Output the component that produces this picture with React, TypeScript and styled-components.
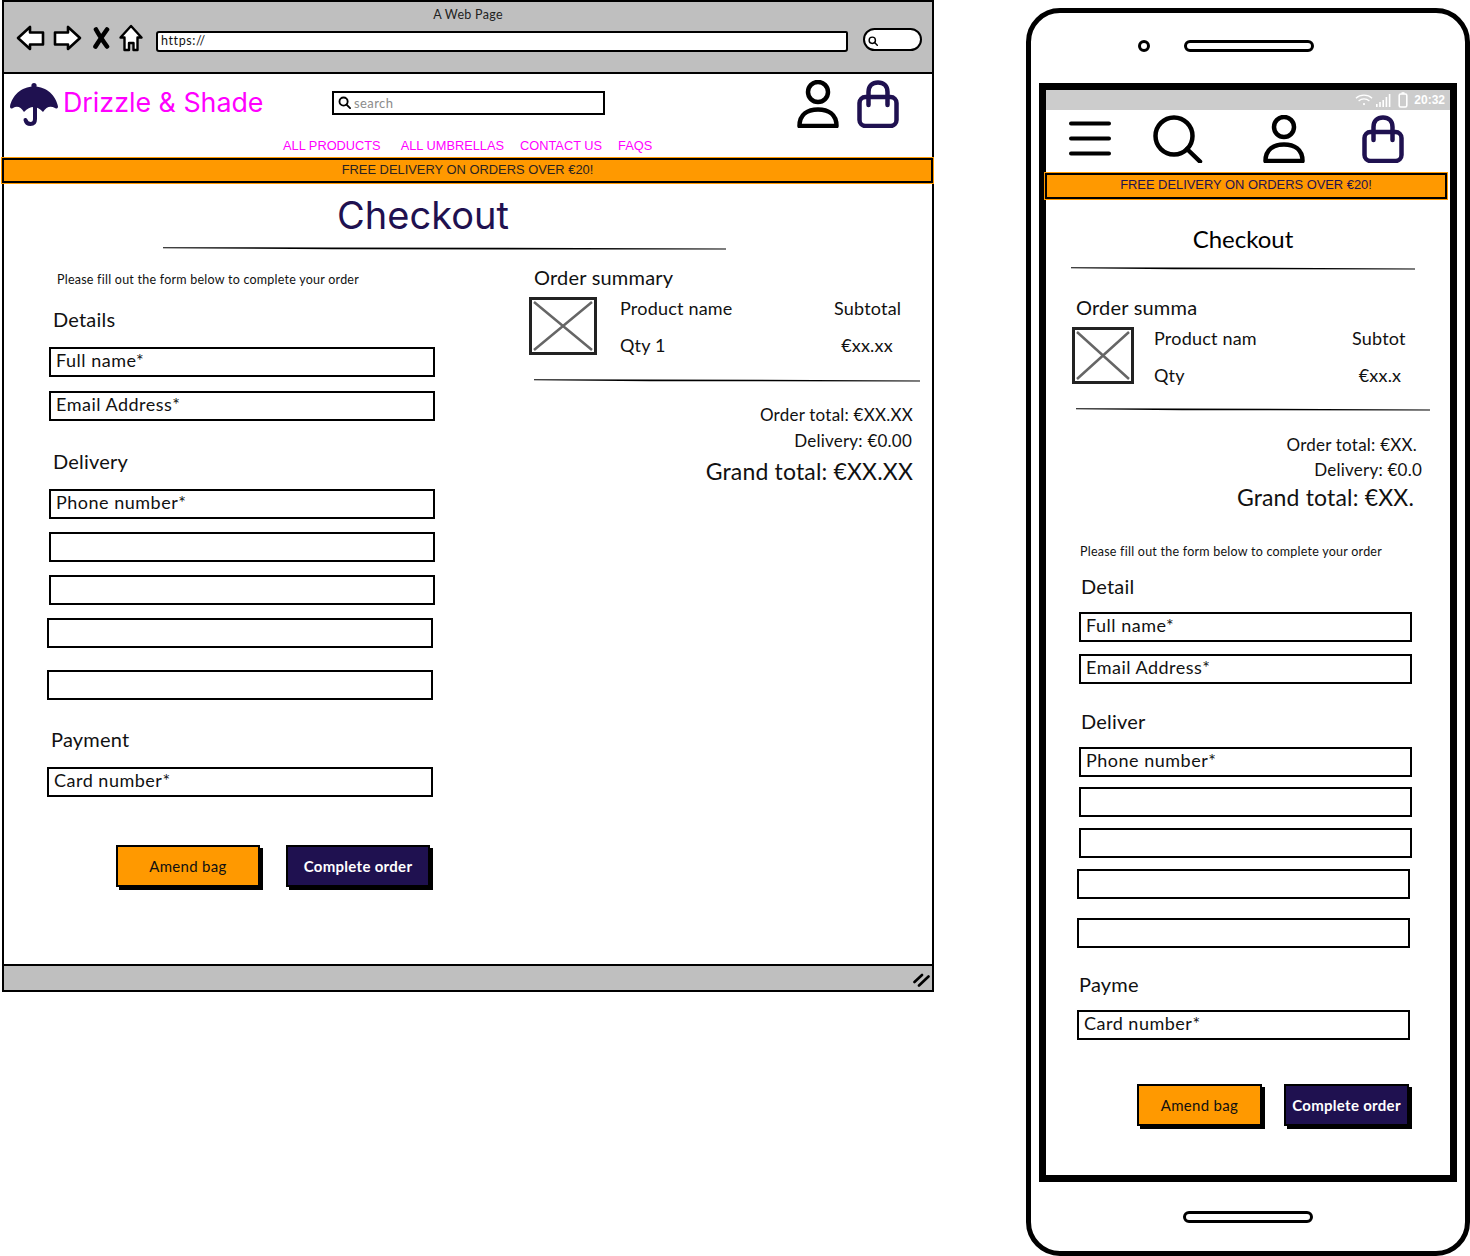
import styled, { createGlobalStyle } from "styled-components";

const NAVY = "#1f1150";
const ORANGE = "#ff9900";
const MAGENTA = "#ff00ff";
const GREY = "#bfbfbf";
const FONT = `Lato, "Open Sans", sans-serif`;

const GlobalStyle = createGlobalStyle`
  html, body { margin: 0; padding: 0; background: #fff; }
  * { box-sizing: border-box; }
  #root { width: 1470px; height: 1256px; overflow: hidden; }
`;

const Page = styled.div`
  display: flex;
  align-items: flex-start;
  padding-left: 2px;
  gap: 92px;
  font-family: ${FONT};
  color: #111;
`;

/* ---------- browser chrome ---------- */

const BrowserWindow = styled.section`
  flex: none;
  width: 932px;
  height: 992px;
  border: 2px solid #000;
  display: flex;
  flex-direction: column;
`;

const TitleBar = styled.header`
  flex: none;
  height: 72px;
  background: ${GREY};
  border-bottom: 2px solid #000;
`;

const PageTitle = styled.div`
  margin-top: 5px;
  text-align: center;
  font-size: 12.5px;
  line-height: 16px;
  color: #222;
  letter-spacing: 0.3px;
`;

const ChromeRow = styled.div`
  display: flex;
  align-items: center;
  height: 30px;
  padding-left: 12px;
`;

const ChromeIcon = styled.svg<{ $gap?: number }>`
  display: block;
  flex: none;
  margin-left: ${(p) => p.$gap ?? 0}px;
`;

const UrlBox = styled.div`
  width: 692px;
  height: 21px;
  margin: 7px 0 0 13px;
  padding-left: 3px;
  background: #fff;
  border: 2.5px solid #000;
  border-radius: 3px 2px 3px 3px;
  font-size: 12.5px;
  line-height: 16px;
  letter-spacing: 0.6px;
`;

const SearchPill = styled.div`
  width: 59px;
  height: 23px;
  margin: 2px 0 0 15px;
  padding: 6px 0 0 3px;
  background: #fff;
  border: 2.5px solid #000;
  border-radius: 12px;
`;

const StatusStrip = styled.footer`
  flex: none;
  height: 26px;
  margin-top: auto;
  padding: 7px 2px 0 0;
  display: flex;
  justify-content: flex-end;
  background: ${GREY};
  border-top: 2px solid #000;
`;

/* ---------- site header ---------- */

const SiteHeader = styled.div`
  flex: none;
  height: 84px;
  padding: 6px 0 0 6px;
  display: grid;
  grid-template-columns: 322px 465px auto auto;
  grid-template-rows: 50px 1fr;
  justify-content: start;
`;

const Brand = styled.div`
  display: flex;
  align-items: flex-start;
  padding-top: 3px;
`;

const BrandName = styled.div`
  margin: 3px 0 0 5px;
  font-family: Inter, sans-serif;
  font-size: 26.8px;
  line-height: 32px;
  color: ${MAGENTA};
  white-space: nowrap;
`;

const SiteSearch = styled.div`
  width: 273px;
  height: 24px;
  margin-top: 11px;
  padding: 0 0 1px 4px;
  display: flex;
  align-items: center;
  gap: 3px;
  border: 2px solid #000;
  border-left-width: 2.5px;
  font-size: 13px;
  color: #8b8b8b;
  letter-spacing: 0.4px;
`;

const HeaderIcon = styled.svg<{ $gap?: number; $top?: number }>`
  display: block;
  flex: none;
  margin-left: ${(p) => p.$gap ?? 0}px;
  margin-top: ${(p) => p.$top ?? 0}px;
`;

const NavLinks = styled.nav`
  grid-column: 1 / -1;
  display: flex;
  gap: 16px;
  padding: 7px 0 0 273px;
  font-family: "Liberation Sans", sans-serif;
  font-size: 12.8px;
  line-height: 18px;
  color: ${MAGENTA};
`;

const NavLink = styled.span<{ $gap?: number }>`
  margin-left: ${(p) => p.$gap ?? 0}px;
  white-space: nowrap;
`;

const Banner = styled.div<{ $navy?: boolean; $width: number; $height: number; $left: number; $top?: number }>`
  flex: none;
  width: ${(p) => p.$width}px;
  height: ${(p) => p.$height}px;
  margin-left: ${(p) => p.$left}px;
  margin-top: ${(p) => p.$top ?? 0}px;
  padding-bottom: 3px;
  background: ${ORANGE};
  border: 2px solid #000;
  outline: 1px solid ${ORANGE};
  display: flex;
  align-items: center;
  justify-content: center;
  font-family: "Liberation Sans", sans-serif;
  font-size: 12.9px;
  color: ${(p) => (p.$navy ? NAVY : "#2a2320")};
  white-space: nowrap;
`;

/* ---------- shared page parts ---------- */

const Heading = styled.h1<{ $size: number; $lineHeight: number; $top: number; $navy?: boolean; $shift?: number }>`
  margin: ${(p) => p.$top}px ${(p) => p.$shift ?? 0}px 0 0;
  text-align: center;
  font-family: ${(p) => (p.$navy ? "Inter, sans-serif" : FONT)};
  font-size: ${(p) => p.$size}px;
  line-height: ${(p) => p.$lineHeight}px;
  font-weight: 400;
  color: ${(p) => (p.$navy ? NAVY : "#000")};
`;

const HeadingBlock = styled.div<{ $width: number; $left: number }>`
  width: ${(p) => p.$width}px;
  margin-left: ${(p) => p.$left}px;
`;

const Rule = styled.svg<{ $width: number; $left?: number; $top: number }>`
  display: block;
  width: ${(p) => p.$width}px;
  height: 3px;
  margin-left: ${(p) => p.$left ?? 0}px;
  margin-top: ${(p) => p.$top}px;
`;

const Columns = styled.div`
  display: grid;
  grid-template-columns: 525px 1fr;
`;

const Column = styled.div`
  display: flex;
  flex-direction: column;
  align-items: flex-start;
`;

const Note = styled.p<{ $left: number; $top: number }>`
  margin: ${(p) => p.$top}px 0 0 ${(p) => p.$left}px;
  font-size: 12.5px;
  line-height: 16px;
  letter-spacing: 0.24px;
  white-space: nowrap;
`;

const SectionLabel = styled.h2<{ $left: number; $top: number }>`
  margin: ${(p) => p.$top}px 0 0 ${(p) => p.$left}px;
  font-size: 20px;
  line-height: 24px;
  font-weight: 400;
  letter-spacing: 0.2px;
  white-space: nowrap;
`;

const Field = styled.div<{ $left: number; $top: number; $width: number }>`
  width: ${(p) => p.$width}px;
  height: 30px;
  margin: ${(p) => p.$top}px 0 0 ${(p) => p.$left}px;
  padding-left: 5px;
  border: 2px solid #000;
  font-size: 18px;
  line-height: 23px;
  letter-spacing: 0.5px;
  background: #fff;
`;

const ButtonRow = styled.div<{ $left: number; $top: number; $gap: number }>`
  display: flex;
  gap: ${(p) => p.$gap}px;
  margin: ${(p) => p.$top}px 0 0 ${(p) => p.$left}px;
`;

const ActionButton = styled.button<{ $primary?: boolean; $width: number }>`
  width: ${(p) => p.$width}px;
  height: 42px;
  padding: 0;
  border: 2px solid #000;
  box-shadow: 3px 3px 0 #000;
  background: ${(p) => (p.$primary ? NAVY : ORANGE)};
  color: ${(p) => (p.$primary ? "#fff" : "#111")};
  font-family: ${FONT};
  font-size: 15px;
  font-weight: ${(p) => (p.$primary ? 700 : 400)};
  letter-spacing: 0.3px;
  white-space: nowrap;
`;

/* ---------- order summary ---------- */

const Product = styled.div<{ $left: number; $columns: string }>`
  display: grid;
  grid-template-columns: ${(p) => p.$columns};
  margin: 8px 0 0 ${(p) => p.$left}px;
`;

const Thumb = styled.svg<{ $height: number }>`
  display: block;
  grid-row: span 2;
  width: 100%;
  height: ${(p) => p.$height}px;
`;

const ProductText = styled.div<{ $center?: boolean; $top?: number }>`
  font-size: 18px;
  line-height: 24px;
  letter-spacing: 0.2px;
  margin-top: ${(p) => p.$top ?? 0}px;
  text-align: ${(p) => (p.$center ? "center" : "left")};
  white-space: nowrap;
`;

const Totals = styled.div<{ $width: number; $left?: number; $top: number }>`
  width: ${(p) => p.$width}px;
  margin: ${(p) => p.$top}px 0 0 ${(p) => p.$left ?? 0}px;
  display: flex;
  flex-direction: column;
  align-items: flex-end;
`;

const TotalLine = styled.div<{ $grand?: boolean; $top?: number; $inset?: number }>`
  font-size: ${(p) => (p.$grand ? 23 : 17)}px;
  line-height: ${(p) => (p.$grand ? 30 : 24)}px;
  letter-spacing: ${(p) => (p.$grand ? 0.17 : 0.23)}px;
  margin-top: ${(p) => p.$top ?? 0}px;
  margin-right: ${(p) => p.$inset ?? 0}px;
  white-space: nowrap;
`;

/* ---------- phone ---------- */

const PhoneFrame = styled.section`
  flex: none;
  width: 444px;
  height: 1248px;
  margin-top: 8px;
  border: 5px solid #000;
  border-radius: 34px;
  display: flex;
  flex-direction: column;
`;

const EarRow = styled.div`
  flex: none;
  height: 12px;
  margin-top: 27px;
  padding-left: 107px;
  display: flex;
  align-items: center;
  gap: 34px;
`;

const Camera = styled.div`
  width: 12px;
  height: 12px;
  border: 3px solid #000;
  border-radius: 50%;
`;

const Speaker = styled.div<{ $top?: number; $left?: number }>`
  width: 130px;
  height: 12px;
  margin-top: ${(p) => p.$top ?? 0}px;
  margin-left: ${(p) => p.$left ?? 0}px;
  border: 3px solid #000;
  border-radius: 6px;
  flex: none;
`;

const Screen = styled.div`
  flex: none;
  width: 418px;
  height: 1099px;
  margin: 31px 0 0 8px;
  border: 7px solid #000;
  display: flex;
  flex-direction: column;
  align-items: flex-start;
`;

const PhoneStatus = styled.div`
  flex: none;
  align-self: stretch;
  height: 20px;
  padding-right: 5px;
  background: #ccc;
  display: flex;
  align-items: center;
  justify-content: flex-end;
  font-family: "Liberation Sans", sans-serif;
  font-size: 12px;
  font-weight: 700;
  color: #fff;
`;

const StatusTime = styled.span`
  margin-left: 6px;
`;

const PhoneIcons = styled.div`
  flex: none;
  display: flex;
  height: 48px;
  margin-top: 5px;
`;

const FILL_TEXT = "Please fill out the form below to complete your order";

const rulePath = "M0 0.3 L30 0.4 L100 1.4 L100 2.6 L30 2.2 L0 1.2Z";

const BackIcon = ({ flip = false, gap = 0 }: { flip?: boolean; gap?: number }) => (
  <ChromeIcon $gap={gap} width="29" height="26" viewBox="0 0 29 26">
    <path
      d="M2 13 L14 2 V7.5 H27 V19.5 H14 V24 Z"
      fill="#fff"
      stroke="#000"
      strokeWidth="2.6"
      strokeLinejoin="round"
      transform={flip ? "matrix(-1 0 0 1 29 0)" : undefined}
    />
  </ChromeIcon>
);

const UserIcon = ({ gap = 0 }: { gap?: number }) => (
  <HeaderIcon $gap={gap} width="42" height="48" viewBox="0 0 42 48" fill="none" stroke="#000" strokeWidth="4.5">
    <circle cx="21" cy="12" r="10" />
    <path d="M2.5 46 C2.5 34 11 29.5 21 29.5 C31 29.5 39.5 34 39.5 46 Z" strokeLinejoin="round" />
  </HeaderIcon>
);

const BagIcon = ({ gap = 0 }: { gap?: number }) => (
  <HeaderIcon $gap={gap} width="42" height="48" viewBox="0 0 42 48" fill="none" stroke={NAVY} strokeWidth="4.5" strokeLinecap="round">
    <rect x="2.5" y="17" width="37" height="29" rx="6" />
    <path d="M11.5 25 V12 C11.5 5.5 15.5 2.5 21 2.5 C26.5 2.5 30.5 5.5 30.5 12 V25" />
  </HeaderIcon>
);

const SmallGlass = ({ size = 14 }: { size?: number }) => (
  <ChromeIcon width={size} height={size} viewBox="0 0 14 14" fill="none" stroke="#000" strokeWidth="2">
    <circle cx="6" cy="6" r="4.4" />
    <path d="M9.2 9.2 L13 13" strokeLinecap="round" />
  </ChromeIcon>
);

const Umbrella = () => (
  <svg width="48" height="43" viewBox="0 0 48 43">
    <circle cx="24" cy="2.6" r="2.6" fill={NAVY} />
    <path
      d="M24 3.5 C11 3.5 2 13 0 23.5 Q0 26.5 3 25 Q9 21 14 29 Q23.5 19 33 29 Q38 21 45 25 Q48 26.5 48 23.5 C46 13 37 3.5 24 3.5Z"
      fill={NAVY}
    />
    <path d="M25 24 V36 Q25 41 20.5 41 Q16.5 41 15.5 37" fill="none" stroke={NAVY} strokeWidth="4" strokeLinecap="round" />
  </svg>
);

const ProductThumb = ({ height, width }: { height: number; width: number }) => (
  <Thumb $height={height} viewBox={`0 0 ${width} ${height}`}>
    <rect x="1.5" y="1.5" width={width - 3} height={height - 3} fill="#fff" stroke="#222" strokeWidth="3" />
    <path d={`M5 5 L${width - 5} ${height - 5} M${width - 5} 5 L5 ${height - 5}`} stroke="#666" strokeWidth="2.5" />
  </Thumb>
);

const TaperRule = (props: { $width: number; $left?: number; $top: number }) => (
  <Rule {...props} viewBox="0 0 100 3" preserveAspectRatio="none">
    <path d={rulePath} fill="#000" />
  </Rule>
);

const Browser = () => (
  <BrowserWindow>
    <TitleBar>
      <PageTitle>A Web Page</PageTitle>
      <ChromeRow>
        <BackIcon />
        <BackIcon flip gap={8} />
        <ChromeIcon $gap={11} width="17" height="22" viewBox="0 0 17 22">
          <path d="M3 2.5 C6 8 10 14 14 19.5 M14 2.5 C10 8 6 14 2.5 19.5" fill="none" stroke="#000" strokeWidth="4.6" strokeLinecap="round" />
        </ChromeIcon>
        <ChromeIcon $gap={9} width="24" height="28" viewBox="0 0 24 28">
          <path d="M12 2 L22.5 13.5 H18.5 V26 H14.5 V19 H10 V26 H5.5 V13.5 H1.5 Z" fill="#fff" stroke="#000" strokeWidth="2.4" strokeLinejoin="round" />
        </ChromeIcon>
        <UrlBox>https://</UrlBox>
        <SearchPill>
          <SmallGlass size={10} />
        </SearchPill>
      </ChromeRow>
    </TitleBar>

    <SiteHeader>
      <Brand>
        <Umbrella />
        <BrandName>Drizzle &amp; Shade</BrandName>
      </Brand>
      <SiteSearch>
        <SmallGlass size={13} />
        search
      </SiteSearch>
      <UserIcon />
      <BagIcon gap={18} />
      <NavLinks>
        <NavLink>ALL PRODUCTS</NavLink>
        <NavLink $gap={4}>ALL UMBRELLAS</NavLink>
        <NavLink>CONTACT US</NavLink>
        <NavLink>FAQS</NavLink>
      </NavLinks>
    </SiteHeader>

    <Banner $width={931} $height={25} $left={-2}>FREE DELIVERY ON ORDERS OVER €20!</Banner>

    <HeadingBlock $width={563} $left={159}>
      <Heading $navy $size={38} $lineHeight={44} $top={10} $shift={43}>Checkout</Heading>
      <TaperRule $width={563} $top={10} />
    </HeadingBlock>

    <Columns>
      <Column>
        <Note $left={53} $top={22}>{FILL_TEXT}</Note>
        <SectionLabel $left={49} $top={19}>Details</SectionLabel>
        <Field $left={45} $top={16} $width={386}>Full name*</Field>
        <Field $left={45} $top={14} $width={386}>Email Address*</Field>
        <SectionLabel $left={49} $top={28}>Delivery</SectionLabel>
        <Field $left={45} $top={16} $width={386}>Phone number*</Field>
        <Field $left={45} $top={13} $width={386} />
        <Field $left={45} $top={13} $width={386} />
        <Field $left={43} $top={13} $width={386} />
        <Field $left={43} $top={22} $width={386} />
        <SectionLabel $left={47} $top={27}>Payment</SectionLabel>
        <Field $left={43} $top={16} $width={386}>Card number*</Field>
        <ButtonRow $left={112} $top={48} $gap={26}>
          <ActionButton $width={144}>Amend bag</ActionButton>
          <ActionButton $primary $width={144}>Complete order</ActionButton>
        </ButtonRow>
      </Column>

      <Column>
        <SectionLabel $left={5} $top={15}>Order summary</SectionLabel>
        <Product $left={0} $columns="68px 23px 214px 66px">
          <ProductThumb width={68} height={58} />
          <span />
          <ProductText $top={-1}>Product name</ProductText>
          <ProductText $top={-1}>Subtotal</ProductText>
          <span />
          <ProductText $top={13}>Qty 1</ProductText>
          <ProductText $center $top={13}>€xx.xx</ProductText>
        </Product>
        <TaperRule $width={386} $left={5} $top={22} />
        <Totals $width={379} $left={5} $top={21}>
          <TotalLine>Order total: €XX.XX</TotalLine>
          <TotalLine $top={2} $inset={1}>Delivery: €0.00</TotalLine>
          <TotalLine $grand $top={3}>Grand total: €XX.XX</TotalLine>
        </Totals>
      </Column>
    </Columns>

    <StatusStrip>
      <svg width="17" height="14" viewBox="0 0 17 14" stroke="#000" strokeWidth="2.6" strokeLinecap="round">
        <path d="M1.5 9 L9 2 M6 12.5 L15.5 3.5" />
      </svg>
    </StatusStrip>
  </BrowserWindow>
);

const Phone = () => (
  <PhoneFrame>
    <EarRow>
      <Camera />
      <Speaker />
    </EarRow>
    <Screen>
      <PhoneStatus>
        <ChromeIcon width="18" height="14" viewBox="0 0 20 14" fill="none" stroke="#fff" strokeWidth="1.4">
          <path d="M1 5 C6 0.5 14 0.5 19 5 M4 8 C7.5 5 12.5 5 16 8" />
          <circle cx="10" cy="11.5" r="1.2" fill="#fff" stroke="none" />
        </ChromeIcon>
        <ChromeIcon $gap={3} width="15" height="13" viewBox="0 0 15 13" fill="#fff">
          <rect x="0" y="10" width="1.6" height="3" />
          <rect x="3.2" y="8" width="1.6" height="5" />
          <rect x="6.4" y="6" width="1.6" height="7" />
          <rect x="9.6" y="3" width="1.6" height="10" />
          <rect x="12.8" y="0" width="1.6" height="13" />
        </ChromeIcon>
        <ChromeIcon $gap={7} width="10" height="16" viewBox="0 0 10 16" fill="none" stroke="#fff" strokeWidth="1.6">
          <rect x="1.2" y="2" width="7.6" height="13" rx="1.5" />
          <path d="M3.5 1 H6.5" />
        </ChromeIcon>
        <StatusTime>20:32</StatusTime>
      </PhoneStatus>

      <PhoneIcons>
        <HeaderIcon $gap={23} $top={6} width="42" height="38" viewBox="0 0 42 38" stroke="#000" strokeWidth="4" strokeLinecap="round">
          <path d="M2 2.5 H40 M2 17.5 H40 M2 32.5 H40" />
        </HeaderIcon>
        <HeaderIcon $gap={42} width="50" height="48" viewBox="0 0 50 48" fill="none" stroke="#000" strokeWidth="4.5" strokeLinecap="round">
          <circle cx="21" cy="21" r="18.5" />
          <path d="M34 34 L47 46.5" />
        </HeaderIcon>
        <UserIcon gap={60} />
        <BagIcon gap={57} />
      </PhoneIcons>

      <Banner $navy $width={402} $height={26} $left={-1} $top={10}>FREE DELIVERY ON ORDERS OVER €20!</Banner>

      <HeadingBlock $width={344} $left={25}>
        <Heading $size={24} $lineHeight={28} $top={26}>Checkout</Heading>
        <TaperRule $width={344} $top={14} />
      </HeadingBlock>

      <SectionLabel $left={30} $top={25}>Order summa</SectionLabel>
      <Product $left={26} $columns="62px 20px 198px 56px">
        <ProductThumb width={62} height={57} />
        <span />
        <ProductText $top={-1}>Product nam</ProductText>
        <ProductText $top={-1}>Subtot</ProductText>
        <span />
        <ProductText $top={13}>Qty</ProductText>
        <ProductText $center $top={13}>€xx.x</ProductText>
      </Product>
      <TaperRule $width={354} $left={30} $top={21} />

      <Totals $width={341} $left={30} $top={22}>
        <TotalLine>Order total: €XX.</TotalLine>
        <TotalLine $top={1} $inset={-5}>Delivery: €0.0</TotalLine>
        <TotalLine $grand $inset={3}>Grand total: €XX.</TotalLine>
      </Totals>

      <Note $left={34} $top={32}>{FILL_TEXT}</Note>
      <SectionLabel $left={35} $top={14}>Detail</SectionLabel>
      <Field $left={33} $top={14} $width={333}>Full name*</Field>
      <Field $left={33} $top={12} $width={333}>Email Address*</Field>
      <SectionLabel $left={35} $top={25}>Deliver</SectionLabel>
      <Field $left={33} $top={14} $width={333}>Phone number*</Field>
      <Field $left={33} $top={10} $width={333} />
      <Field $left={33} $top={11} $width={333} />
      <Field $left={31} $top={11} $width={333} />
      <Field $left={31} $top={19} $width={333} />
      <SectionLabel $left={33} $top={24}>Payme</SectionLabel>
      <Field $left={31} $top={14} $width={333}>Card number*</Field>
      <ButtonRow $left={91} $top={44} $gap={22}>
        <ActionButton $width={125}>Amend bag</ActionButton>
        <ActionButton $primary $width={125}>Complete order</ActionButton>
      </ButtonRow>
    </Screen>
    <Speaker $left={152} $top={29} />
  </PhoneFrame>
);

export default function App() {
  return (
    <>
      <GlobalStyle />
      <Page>
        <Browser />
        <Phone />
      </Page>
    </>
  );
}
